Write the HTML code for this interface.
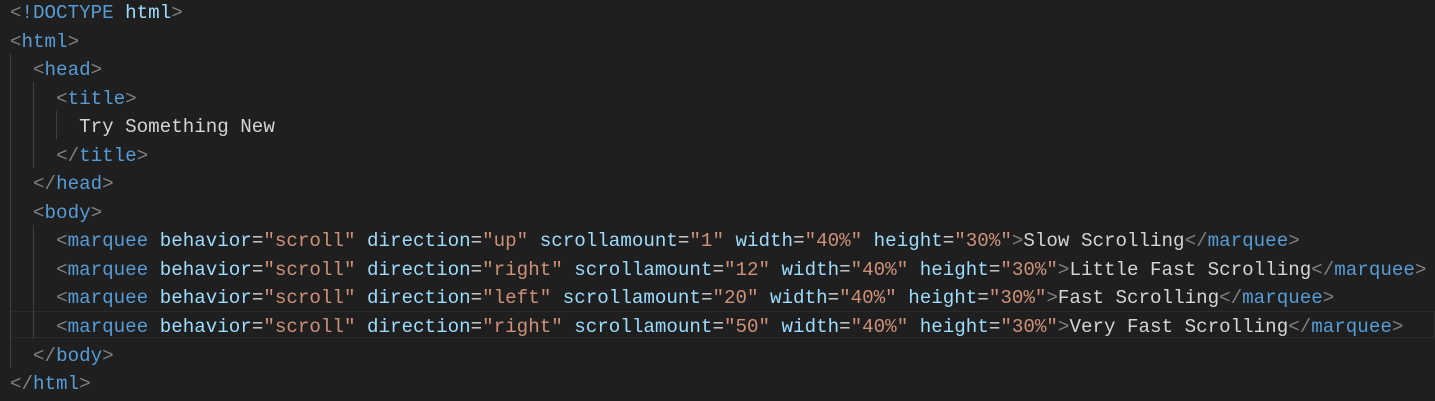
<!DOCTYPE html>
<html><head><style>
body{margin:0;background:#1f1f1f;width:1435px;height:401px;overflow:hidden;position:relative}
.c{position:absolute;left:10px;top:-1px;font-family:"Liberation Mono",monospace;font-size:19.2px;line-height:28.55px;color:#d4d4d4;white-space:pre}
.t{color:#569cd6}.p{color:#808080}.a{color:#9cdcfe}.s{color:#ce9178}
.g{position:absolute;width:1px;background:#404040}
.hl{position:absolute;left:10px;right:0;top:311px;height:27px;border:1px solid #2a2a2a;box-sizing:border-box}
</style></head><body>
<div class="hl"></div>
<div class="g" style="left:10px;top:54px;height:314px"></div>
<div class="g" style="left:33px;top:82px;height:86px"></div>
<div class="g" style="left:33px;top:225px;height:114px"></div>
<div class="g" style="left:56px;top:111px;height:28px"></div>
<div class="c"><span class="p">&lt;</span><span class="t">!DOCTYPE</span> <span class="a">html</span><span class="p">&gt;</span>
<span class="p">&lt;</span><span class="t">html</span><span class="p">&gt;</span>
  <span class="p">&lt;</span><span class="t">head</span><span class="p">&gt;</span>
    <span class="p">&lt;</span><span class="t">title</span><span class="p">&gt;</span>
      Try Something New
    <span class="p">&lt;/</span><span class="t">title</span><span class="p">&gt;</span>
  <span class="p">&lt;/</span><span class="t">head</span><span class="p">&gt;</span>
  <span class="p">&lt;</span><span class="t">body</span><span class="p">&gt;</span>
    <span class="p">&lt;</span><span class="t">marquee</span> <span class="a">behavior</span>=<span class="s">"scroll"</span> <span class="a">direction</span>=<span class="s">"up"</span> <span class="a">scrollamount</span>=<span class="s">"1"</span> <span class="a">width</span>=<span class="s">"40%"</span> <span class="a">height</span>=<span class="s">"30%"</span><span class="p">&gt;</span>Slow Scrolling<span class="p">&lt;/</span><span class="t">marquee</span><span class="p">&gt;</span>
    <span class="p">&lt;</span><span class="t">marquee</span> <span class="a">behavior</span>=<span class="s">"scroll"</span> <span class="a">direction</span>=<span class="s">"right"</span> <span class="a">scrollamount</span>=<span class="s">"12"</span> <span class="a">width</span>=<span class="s">"40%"</span> <span class="a">height</span>=<span class="s">"30%"</span><span class="p">&gt;</span>Little Fast Scrolling<span class="p">&lt;/</span><span class="t">marquee</span><span class="p">&gt;</span>
    <span class="p">&lt;</span><span class="t">marquee</span> <span class="a">behavior</span>=<span class="s">"scroll"</span> <span class="a">direction</span>=<span class="s">"left"</span> <span class="a">scrollamount</span>=<span class="s">"20"</span> <span class="a">width</span>=<span class="s">"40%"</span> <span class="a">height</span>=<span class="s">"30%"</span><span class="p">&gt;</span>Fast Scrolling<span class="p">&lt;/</span><span class="t">marquee</span><span class="p">&gt;</span>
    <span class="p">&lt;</span><span class="t">marquee</span> <span class="a">behavior</span>=<span class="s">"scroll"</span> <span class="a">direction</span>=<span class="s">"right"</span> <span class="a">scrollamount</span>=<span class="s">"50"</span> <span class="a">width</span>=<span class="s">"40%"</span> <span class="a">height</span>=<span class="s">"30%"</span><span class="p">&gt;</span>Very Fast Scrolling<span class="p">&lt;/</span><span class="t">marquee</span><span class="p">&gt;</span>
  <span class="p">&lt;/</span><span class="t">body</span><span class="p">&gt;</span>
<span class="p">&lt;/</span><span class="t">html</span><span class="p">&gt;</span></div>
</body></html>
